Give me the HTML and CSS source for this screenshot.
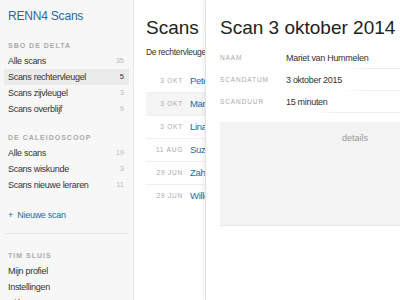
FILE: index.html
```html
<html>
<head>
<title>RENN4 Scans</title>
<meta charset="utf-8">
<link rel="stylesheet" href="styles.css">
</head>
<body>

<div class="app">

<div class="sidebar">
    <div class="logo">RENN4 Scans</div>

    <div class="group">
        <div class="label">SBO de Delta</div>
        <a class="item">Alle scans <span class="count">35</span></a>
        <a class="item active">Scans rechtervleugel <span class="count">5</span></a>
        <a class="item">Scans zijvleugel <span class="count">3</span></a>
        <a class="item">Scans overblijf <span class="count">9</span></a>
    </div>

    <div class="group">
        <div class="label">De Caleidoscoop</div>
        <a class="item">Alle scans <span class="count">19</span></a>
        <a class="item">Scans wiskunde <span class="count">3</span></a>
        <a class="item">Scans nieuwe leraren <span class="count">11</span></a>
    </div>

    <a class="new">+&nbsp; Nieuwe scan</a>

    <hr class="rule">

    <div class="group">
        <div class="label">Tim Sluis</div>
        <a class="item">Mijn profiel</a>
        <a class="item">Instellingen</a>
        <a class="item">Uitloggen</a>
    </div>
</div>

<div class="main">
    <h1>Scans rechtervleugel</h1>
    <p class="intro">De rechtervleugel van SBO de Delta</p>

    <div class="list">
        <div class="row"><span class="date">3 okt</span><span class="name">Peter de Vries</span></div>
        <div class="row current"><span class="date">3 okt</span><span class="name">Mariet van Hummelen</span></div>
        <div class="row"><span class="date">3 okt</span><span class="name">Lina Bakker</span></div>
        <div class="row"><span class="date">11 aug</span><span class="name">Suzanne Jansen</span></div>
        <div class="row"><span class="date">29 jun</span><span class="name">Zahir el Amrani</span></div>
        <div class="row"><span class="date">29 jun</span><span class="name">Willem Visser</span></div>
    </div>
</div>

<!-- detail panel slides over the list -->
<div class="panel">
    <h1>Scan 3 oktober 2014</h1>
    <div class="fields">
        <div class="field"><span class="key">Naam</span><span class="val">Mariet van Hummelen</span></div>
        <div class="field"><span class="key">Scandatum</span><span class="val">3 oktober 2015</span></div>
        <div class="field"><span class="key">Scanduur</span><span class="val">15 minuten</span></div>
    </div>
    <div class="details">details</div>
</div>

</div>

</body>
</html>
```

FILE: styles.css
```css
html, body {
  margin: 0;
  height: 100%;
  background: #fff;
}

body {
  font: 9px/16px "Liberation Sans", Arial, sans-serif;
  letter-spacing: -0.3px;
  color: #333;
  overflow: hidden;
}

.app {
  display: flex;
  height: 300px;
  position: relative;
  overflow: hidden;
}

/* Sidebar */
.sidebar {
  width: 133px;
  flex: none;
  background: #f7f7f7;
  border-right: 1px solid #e8e8e8;
}

.logo {
  color: #1d6aa5;
  font-size: 12px;
  padding: 8px 8px 5px;
  letter-spacing: -0.2px;
}

.group + .group {
  margin-top: 4px;
}

.label {
  color: #aaa;
  font-size: 7px;
  line-height: 14px;
  font-weight: bold;
  letter-spacing: 1px;
  text-transform: uppercase;
  padding: 10px 8px 0;
}

.item {
  display: flex;
  justify-content: space-between;
  margin: 0 4px;
  padding: 0 5px 0 4px;
  color: #333;
}

.item.active {
  background: #ebebeb;
}

.count {
  color: #bbb;
  font-size: 7.5px;
  letter-spacing: 0;
}

.active .count {
  color: #333;
}

.new {
  display: block;
  color: #1d6aa5;
  padding: 14px 8px 0;
}

.rule {
  border: 0;
  border-top: 1px solid #e6e6e6;
  margin: 10px 5px 0 4px;
}

.rule + .group .label {
  padding-top: 15px;
}

/* List column */
.main {
  flex: 1;
  padding-left: 12px;
  white-space: nowrap;
}

h1 {
  font-weight: normal;
  font-size: 19px;
  line-height: 24px;
  letter-spacing: 0;
  margin: 16px 0 0;
  color: #222;
}

.intro {
  font-size: 8.5px;
  margin: 4px 0 0;
  line-height: 16px;
}

.list {
  margin-top: 10px;
}

.row {
  display: flex;
  align-items: center;
  height: 22px;
  border-bottom: 1px solid #f0f0f0;
}

.row:last-child {
  border-bottom: 0;
}

.row.current {
  background: #f5f5f5;
}

.date {
  width: 37px;
  text-align: right;
  color: #aaa;
  font-size: 6.5px;
  letter-spacing: 0.8px;
  text-transform: uppercase;
  margin-right: 7px;
}

.name {
  color: #1d6aa5;
  font-size: 9.5px;
}

/* Detail panel */
.panel {
  position: absolute;
  top: 0;
  bottom: 0;
  left: 205px;
  width: 285px;
  background: #fff;
  border-left: 1px solid #e4e4e4;
  box-shadow: -2px 0 4px rgba(0, 0, 0, 0.06);
  padding-left: 14px;
  box-sizing: border-box;
}

.fields {
  margin-top: 7px;
}

.field {
  display: flex;
  height: 22px;
  align-items: center;
  background: linear-gradient(to right, rgba(238, 238, 238, 0) 45%, #ececec 55%) bottom / 100% 1px no-repeat;
}

.field:last-child {
  background-image: linear-gradient(to right, rgba(238, 238, 238, 0) 35%, #ececec 45%);
}

.key {
  width: 66px;
  color: #aaa;
  font-size: 6.5px;
  letter-spacing: 0.9px;
  text-transform: uppercase;
}

.val {
  font-size: 9px;
}

.details {
  margin-top: 9px;
  height: 104px;
  background: #f3f3f3;
  border-bottom: 1px solid #e6e6e6;
  text-align: center;
  color: #999;
  font-size: 9px;
  letter-spacing: 0;
  padding-top: 8px;
  box-sizing: border-box;
}
```
